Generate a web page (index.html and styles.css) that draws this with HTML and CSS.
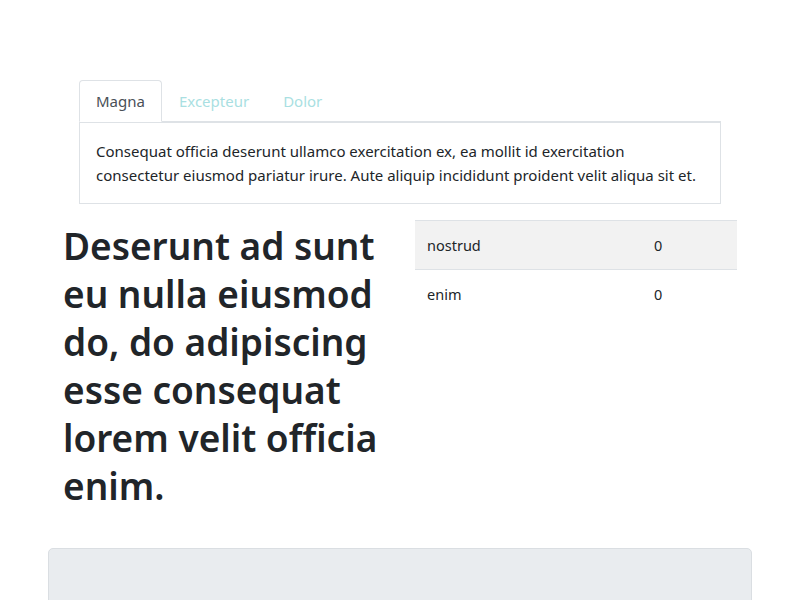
FILE: index.html
```html
<!DOCTYPE html>
<html>
<head>
<meta charset="utf-8">
<link rel="stylesheet" href="styles.css">
</head>
<body>
<div class="page">
  <div class="tabs-wrap">
    <ul class="nav-tabs">
      <li class="tab active">Magna</li>
      <li class="tab">Excepteur</li>
      <li class="tab">Dolor</li>
    </ul>
    <div class="tab-content">
      <p>Consequat officia deserunt ullamco exercitation ex, ea mollit id exercitation consectetur eiusmod pariatur irure. Aute aliquip incididunt proident velit aliqua sit et.</p>
    </div>
  </div>
  <div class="row">
    <div class="col">
      <h1>Deserunt ad sunt eu nulla eiusmod do, do adipiscing esse consequat lorem velit officia enim.</h1>
    </div>
    <div class="col">
      <table class="table">
        <tr class="striped"><td class="c1">nostrud</td><td>0</td></tr>
        <tr><td class="c1">enim</td><td>0</td></tr>
      </table>
    </div>
  </div>
  <div class="jumbotron"></div>
</div>
</body>
</html>
```
FILE: styles.css
```css
html, body {
  margin: 0;
  padding: 0;
  background: #fff;
}
body {
  font-family: "Noto Sans", "Open Sans", sans-serif;
  font-size: 15px;
  line-height: 24px;
  color: #212529;
}
.page {
  width: 704px;
  margin: 0 auto;
  padding-top: 80px;
}
.tabs-wrap {
  margin: 0 31px;
}
.nav-tabs {
  list-style: none;
  margin: 0;
  padding: 0;
  display: flex;
  border-bottom: 1px solid #dee2e6;
}
.tab {
  padding: 8px 16px;
  border: 1px solid transparent;
  border-top-left-radius: 4px;
  border-top-right-radius: 4px;
  margin-bottom: -1px;
  color: #a9dfe2;
}
.tab.active {
  color: #495057;
  background: #fff;
  border-color: #dee2e6 #dee2e6 #fff;
}
.tab-content {
  border: 1px solid #dee2e6;
  padding: 16px;
}
.tab-content p {
  margin: 0;
}
.row {
  display: flex;
  margin-top: 16px;
}
.col {
  flex: 1 1 0;
  padding: 0 15px;
}
h1 {
  margin: 0 0 6px;
  padding-top: 2px;
  font-size: 37px;
  line-height: 48px;
  font-weight: 600;
}
.table {
  width: 100%;
  border-collapse: collapse;
}
.table td {
  padding: 12px;
  border-top: 1px solid #dee2e6;
  font-size: 14.5px;
  line-height: 24px;
}
.table .c1 {
  width: 203px;
}
.striped {
  background: #f2f2f2;
}
.jumbotron {
  margin-top: 32px;
  height: 120px;
  background: #e9ecef;
  border: 1px solid #dadee2;
  border-radius: 5px;
}
```
